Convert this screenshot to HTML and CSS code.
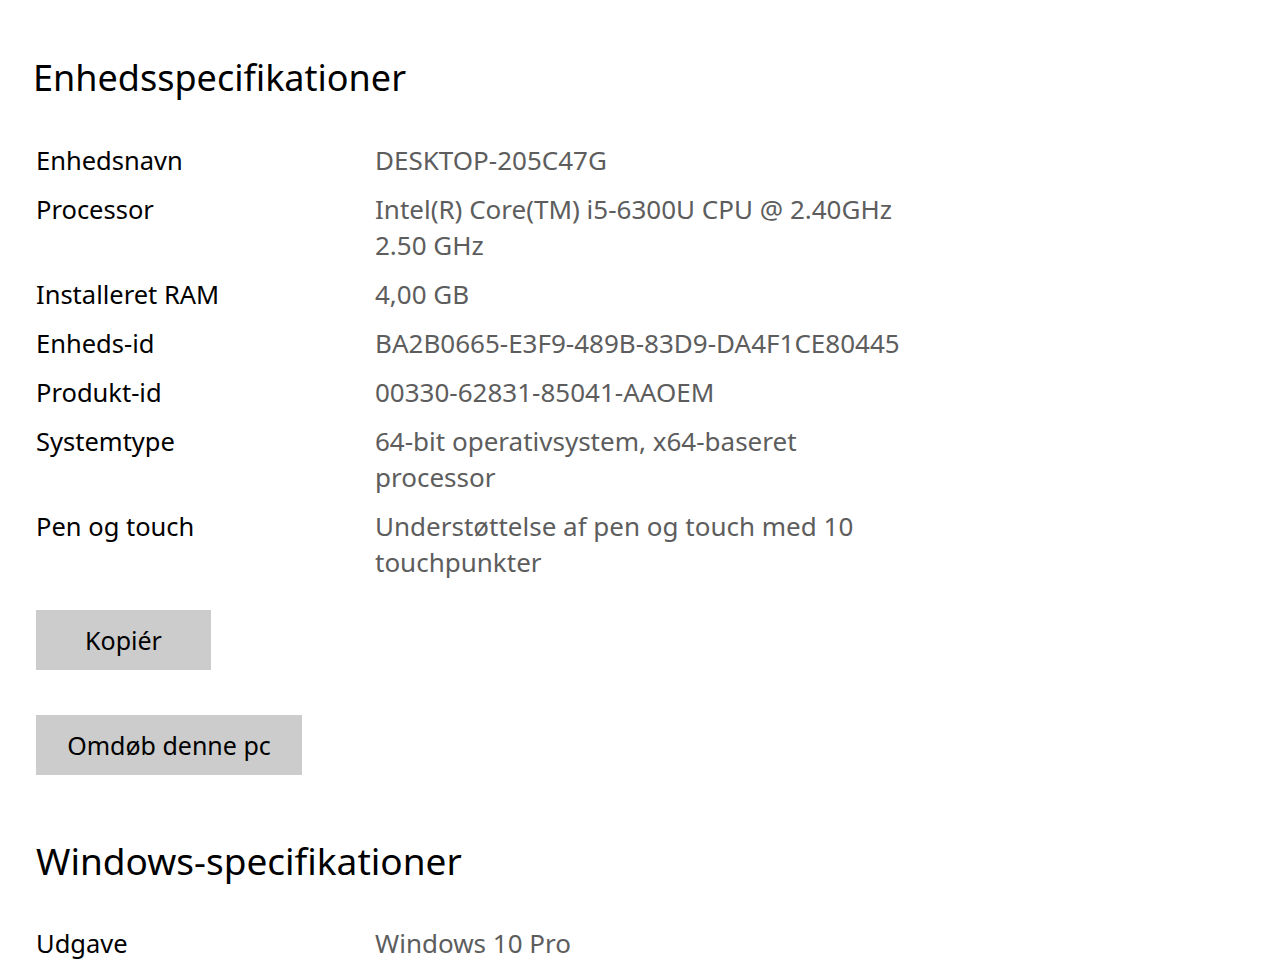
FILE: index.html
```html
<!DOCTYPE html>
<html lang="da">
<head>
<meta charset="utf-8">
<link rel="stylesheet" href="styles.css">
</head>
<body>
<main class="page">
  <h1 class="heading first">Enhedsspecifikationer</h1>
  <dl class="specs">
    <div class="row"><dt>Enhedsnavn</dt><dd>DESKTOP-205C47G</dd></div>
    <div class="row"><dt>Processor</dt><dd>Intel(R) Core(TM) i5-6300U CPU @ 2.40GHz<br>2.50 GHz</dd></div>
    <div class="row"><dt>Installeret RAM</dt><dd>4,00 GB</dd></div>
    <div class="row"><dt>Enheds-id</dt><dd>BA2B0665-E3F9-489B-83D9-DA4F1CE80445</dd></div>
    <div class="row"><dt>Produkt-id</dt><dd>00330-62831-85041-AAOEM</dd></div>
    <div class="row"><dt>Systemtype</dt><dd>64-bit operativsystem, x64-baseret<br>processor</dd></div>
    <div class="row"><dt>Pen og touch</dt><dd>Understøttelse af pen og touch med 10<br>touchpunkter</dd></div>
  </dl>
  <div class="actions">
    <button class="btn btn-copy">Kopiér</button>
    <button class="btn btn-rename">Omdøb denne pc</button>
  </div>
  <h2 class="heading second">Windows-specifikationer</h2>
  <dl class="specs last">
    <div class="row"><dt>Udgave</dt><dd>Windows 10 Pro</dd></div>
  </dl>
</main>
</body>
</html>
```
FILE: styles.css
```css
html, body {
  margin: 0;
  padding: 0;
  background: #ffffff;
}
body {
  font-family: "Noto Sans", "Open Sans", sans-serif;
  color: #000000;
  overflow: hidden;
  height: 960px;
}
.page {
  padding: 54px 0 0 36px;
}
.heading {
  font-weight: 400;
  font-size: 36px;
  line-height: 48px;
  margin: 0;
}
.heading.first {
  margin-left: -3px;
}
.heading.second {
  margin-top: 62px;
  font-size: 37px;
}
.specs {
  margin: 40px 0 0 0;
  display: flex;
  flex-direction: column;
  gap: 13px;
}
.specs.last {
  margin-top: 40px;
}
.row {
  display: grid;
  grid-template-columns: 339px 1fr;
  line-height: 36px;
}
.row dt {
  margin: 0;
  color: #000000;
  font-size: 25.5px;
}
.row dd {
  margin: 0;
  color: #5d5d5d;
  font-size: 26px;
}
.actions {
  margin-top: 30px;
  display: flex;
  flex-direction: column;
  align-items: flex-start;
  gap: 45px;
}
.btn {
  font-family: inherit;
  font-size: 25px;
  color: #000000;
  background: #cccccc;
  border: none;
  height: 60px;
  padding: 0;
  margin: 0;
}
.btn-copy {
  width: 175px;
}
.btn-rename {
  width: 266px;
}
```
